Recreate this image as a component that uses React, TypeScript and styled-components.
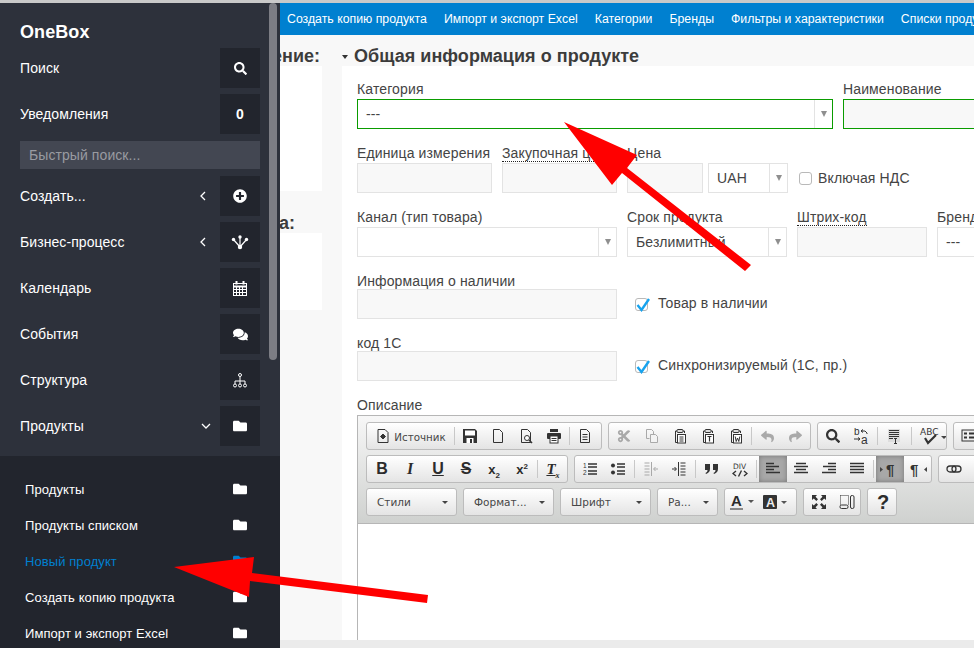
import React from 'react';
import styled, { createGlobalStyle } from 'styled-components';
import { FaSearch, FaPlusCircle, FaComments, FaFolder, FaReply, FaShare, FaCut } from 'react-icons/fa';

const Global = createGlobalStyle`
  html, body { margin: 0; padding: 0; background: #f8f8f8; }
  body { font-family: "Liberation Sans", Arial, sans-serif; overflow: hidden; }
  * { box-sizing: border-box; }
`;

const Page = styled.div`
  position: relative;
  width: 974px;
  height: 648px;
  overflow: hidden;
  display: flex;
  flex-direction: column;
  background: #f8f8f8;
`;
const TopStrip = styled.div`height: 3px; flex: none; background: #c9c9c9;`;
const Shell = styled.div`flex: 1; display: flex; min-height: 0;`;

const Sidebar = styled.aside`
  position: relative;
  width: 280px;
  flex: none;
  background: #2d313b;
  color: #fff;
  letter-spacing: 0.08px;
  display: flex;
  flex-direction: column;
  overflow: hidden;
`;
const Thumb = styled.div`
  position: absolute;
  left: 269px;
  top: 0;
  width: 8px;
  height: 357px;
  border-radius: 4px;
  background: #7c7d84;
`;
const Brand = styled.div`
  height: 45px;
  padding: 19px 20px 0;
  font-size: 18px;
  line-height: 21px;
  font-weight: 700;
`;
const MenuList = styled.div`
  display: flex;
  flex-direction: column;
  gap: 6px;
  padding: 0 20px;
`;
const MenuRow = styled.div`
  height: 40px;
  display: flex;
  align-items: center;
  font-size: 14px;
`;
const MenuLabel = styled.span`flex: 1;`;
const Chevron = styled.span<{ $right: number }>`
  display: flex;
  margin-right: ${p => p.$right}px;
`;
const Tile = styled.span<{ $size: number; $active?: boolean }>`
  width: ${p => p.$size}px;
  height: ${p => p.$size}px;
  flex: none;
  display: flex;
  align-items: center;
  justify-content: center;
  background: #22252d;
  color: ${p => (p.$active ? '#0080d0' : '#fff')};
  font-size: 14px;
  font-weight: 700;
`;
const QuickSearch = styled.div`
  height: 28px;
  margin: 1px 0;
  padding-left: 9px;
  display: flex;
  align-items: center;
  font-size: 14px;
  color: #999ba1;
  background: #434752;
`;
const SubMenu = styled.div`
  flex: 1;
  margin-top: 10px;
  padding: 18px 25px 0;
  background: #22252d;
  display: flex;
  flex-direction: column;
  gap: 6px;
`;
const SubRow = styled.div<{ $active?: boolean }>`
  height: 30px;
  flex: none;
  display: flex;
  align-items: center;
  justify-content: space-between;
  font-size: 13px;
  color: ${p => (p.$active ? '#0080d0' : '#fff')};
`;

const Main = styled.main`
  flex: 1;
  min-width: 0;
  display: flex;
  flex-direction: column;
  overflow: hidden;
`;
const Nav = styled.nav`
  height: 32px;
  flex: none;
  display: flex;
  align-items: center;
  gap: 17px;
  padding: 0 0 1px 7px;
  background: #0080d0;
  color: #fff;
  font-size: 12.3px;
  white-space: nowrap;
  overflow: hidden;
`;
const Body = styled.div`flex: 1; min-height: 0; display: flex;`;
const SideColumn = styled.div`
  width: 62px;
  flex: none;
  display: flex;
  flex-direction: column;
  overflow: hidden;
`;
const SideTitle = styled.div<{ $pad: number; $top?: number }>`
  height: 31px;
  margin-top: ${p => p.$top ?? 0}px;
  display: flex;
  justify-content: flex-end;
  align-items: flex-end;
  padding-right: ${p => p.$pad}px;
  font-size: 18px;
  line-height: 20px;
  font-weight: 700;
  color: #3c3c3c;
  white-space: nowrap;
`;
const SidePanel = styled.div<{ $h: number }>`
  width: 42px;
  height: ${p => p.$h}px;
  background: #fff;
`;
const FormColumn = styled.div`flex: 1; min-width: 0; display: flex; flex-direction: column; overflow: hidden;`;
const FormTitle = styled.h2`
  height: 31px;
  flex: none;
  margin: 0;
  display: flex;
  align-items: flex-end;
  gap: 6px;
  font-size: 18px;
  line-height: 20px;
  font-weight: 700;
  letter-spacing: 0.04px;
  color: #3c3c3c;
  white-space: nowrap;
`;
const TitleCaret = styled.span`
  width: 0;
  height: 0;
  margin-bottom: 7px;
  border-left: 3.5px solid transparent;
  border-right: 3.5px solid transparent;
  border-top: 4px solid #333;
`;
const FormPanel = styled.div`
  flex: 1;
  min-height: 0;
  padding: 15px 0 0 15px;
  background: #fff;
  letter-spacing: 0.13px;
  display: flex;
  flex-direction: column;
  overflow: hidden;
`;
const Row = styled.div<{ $top: number }>`
  display: flex;
  gap: 10px;
  margin-top: ${p => p.$top}px;
  align-items: flex-end;
  flex: none;
  width: 800px;
`;
const Field = styled.div<{ $w: number; $shift?: number }>`
  width: ${p => p.$w}px;
  margin-left: ${p => p.$shift ?? 0}px;
  flex: none;
`;
const Label = styled.div<{ $top?: number; $close?: boolean }>`
  height: ${p => (p.$close ? 16 : 18)}px;
  margin-top: ${p => p.$top ?? 0}px;
  flex: none;
  line-height: 17px;
  font-size: 14px;
  color: #444;
  white-space: nowrap;
`;
const HintText = styled.span`
  border-bottom: 1px dotted #222;
  display: inline-block;
  line-height: 15px;
`;
const TextBox = styled.div<{ $green?: boolean }>`
  height: 30px;
  background: #f8f8f8;
  border: 1px solid ${p => (p.$green ? '#0a9c00' : '#e3e3e3')};
`;
const SelectBox = styled.div<{ $green?: boolean }>`
  height: 30px;
  display: flex;
  background: #fff;
  border: 1px solid ${p => (p.$green ? '#0a9c00' : '#e3e3e3')};
  font-size: 14px;
  color: #444;
`;
const SelectValue = styled.div`flex: 1; display: flex; align-items: center; padding-left: 8px; white-space: nowrap; overflow: hidden;`;
const SelectArrow = styled.div`
  width: 18px;
  flex: none;
  display: flex;
  align-items: center;
  justify-content: center;
  border-left: 1px solid #e3e3e3;
  &::before {
    content: '';
    border-left: 3.5px solid transparent;
    border-right: 3.5px solid transparent;
    border-top: 6px solid #8f8f8f;
  }
`;
const CheckRow = styled.label<{ $left: number; $gap: number }>`
  height: 30px;
  margin-left: ${p => p.$left}px;
  display: flex;
  align-items: center;
  gap: ${p => p.$gap}px;
  font-size: 14px;
  color: #444;
  white-space: nowrap;
`;
const CheckText = styled.span<{ $lift?: boolean }>`
  padding-bottom: ${p => (p.$lift ? 2 : 0)}px;
`;
const CheckMark = styled.span`
  position: relative;
  width: 13px;
  height: 13px;
  flex: none;
  border: 1px solid #b9b9b9;
  border-radius: 3px;
  background: #fff;
  svg { position: absolute; left: -1px; top: -3px; }
`;

const Editor = styled.div`
  flex: 1;
  width: 800px;
  background: #fff;
  letter-spacing: 0;
  border-left: 1px solid #b6b6b6;
  border-top: 1px solid #b6b6b6;
`;
const Toolbar = styled.div`
  height: 108px;
  padding: 6px 0 0 8px;
  background: linear-gradient(#f7f7f7, #cfd1cf);
  border-bottom: 1px solid #b6b6b6;
  display: flex;
  flex-direction: column;
  gap: 5px;
`;
const ToolRow = styled.div`display: flex; gap: 6px; height: 28px;`;
const Group = styled.div<{ $w: number }>`
  width: ${p => p.$w}px;
  height: 28px;
  flex: none;
  padding-left: 1px;
  display: flex;
  align-items: center;
  border: 1px solid #bcbcbc;
  border-radius: 3px;
  background: linear-gradient(#fff, #e4e4e4);
  overflow: hidden;
`;
const Btn = styled.span<{ $w?: number; $on?: boolean }>`
  width: ${p => p.$w ?? 28}px;
  height: 26px;
  flex: none;
  display: flex;
  align-items: center;
  justify-content: center;
  gap: 3px;
  font-size: 10.3px;
  color: #474747;
  font-family: "DejaVu Sans", Verdana, sans-serif;
  background: ${p => (p.$on ? '#a8a8a8' : 'transparent')};
  box-shadow: ${p => (p.$on ? 'inset 0 0 5px #777' : 'none')};
`;
const BtnText = styled.span`padding-top: 1px;`;
const Sep = styled.i<{ $m?: number }>`
  width: 1px;
  height: 18px;
  flex: none;
  margin: 0 ${p => p.$m ?? 1}px;
  background: #c8c8c8;
`;
const Combo = styled.div<{ $w: number }>`
  width: ${p => p.$w}px;
  height: 28px;
  flex: none;
  padding: 0 8px 0 10px;
  display: flex;
  align-items: center;
  justify-content: space-between;
  border: 1px solid #bcbcbc;
  border-radius: 3px;
  background: linear-gradient(#fff, #e4e4e4);
  font: 10.5px "DejaVu Sans", Verdana, sans-serif;
  color: #474747;
  &::after {
    content: '';
    border-left: 3px solid transparent;
    border-right: 3px solid transparent;
    border-top: 3px solid #444;
  }
`;
const Glyph = styled.span<{ $font?: string; $size?: number; $italic?: boolean; $line?: string }>`
  font-family: ${p => p.$font ?? '"Liberation Sans"'}, sans-serif;
  font-size: ${p => p.$size ?? 16}px;
  font-weight: 700;
  font-style: ${p => (p.$italic ? 'italic' : 'normal')};
  text-decoration: ${p => p.$line ?? 'none'};
  color: #2c2c2c;
  line-height: 1;
  sub, sup { font-size: 8px; line-height: 0; }
`;
const Overlay = styled.svg`
  position: absolute;
  left: 0;
  top: 0;
  pointer-events: none;
`;
const ScrollTrack = styled.div`height: 8px; flex: none; background: #ebebeb;`;

const D = '#333';
const G = '#a9a9a9';
const Ic: React.FC<{ size?: number; w?: number; children: React.ReactNode }> = ({ size = 16, w, children }) => (
  <svg width={w ?? size} height={size} viewBox={`0 0 ${w ?? 16} 16`} fill="none" stroke={D} strokeWidth="1">{children}</svg>
);
const lines = (rows: [number, number][], color = D) => rows.map(([a, b], i) => (
  <path key={i} d={`M${a} ${2.5 + i * 3}H${b}`} stroke={color} strokeWidth="1.6" />
));

const Doc = () => <path d="M3.5 1.5h6l3 3v10h-9z" />;
const Clip = ({ c = D }: { c?: string }) => (
  <>
    <path d="M5 3H3.5v11.5H5M11 3h1.5v2" stroke={c} />
    <rect x="5" y="1.5" width="6" height="3" rx="1" stroke={c} fill="#ddd" />
    <rect x="5.5" y="6.5" width="8" height="8.5" stroke={c} fill="#fff" />
  </>
);
const Source = () => <Ic><path d="M3 1.5h7l3 3v10H3z" /><path d="M8 6l2.5 2.5L8 11 5.5 8.5z" fill={D} /></Ic>;
const Save = () => <Ic><path d="M1 1h12l2 2v12H1z" fill={D} stroke="none" /><rect x="3" y="2.5" width="10" height="5" fill="#fff" stroke="none" /><rect x="4.5" y="10" width="7" height="5" fill="#fff" stroke="none" /><rect x="8" y="11" width="2" height="4" fill={D} stroke="none" /></Ic>;
const NewDoc = () => <Ic><Doc /></Ic>;
const Preview = () => <Ic><Doc /><circle cx="9" cy="10" r="2.5" fill="#fff" /><path d="M11 12l3 3" strokeWidth="1.6" /></Ic>;
const Print = () => <Ic><rect x="4" y="1" width="8" height="3" fill={D} stroke="none" /><rect x="1" y="5" width="14" height="6" rx="1" fill={D} stroke="none" /><rect x="4" y="8" width="8" height="7" fill="#fff" /><path d="M5.5 10.5h5M5.5 12.5h5" /></Ic>;
const Templates = () => <Ic><Doc /><path d="M5.5 6.5h5M5.5 9h5M5.5 11.5h5" /></Ic>;
const Copy = () => <Ic><g stroke={G}><path d="M2.5 1.5h5l2 2v3" /><path d="M2.5 1.5v9h3" /><path d="M6.5 6.5h5l2 2v6h-7z" fill="#f3f3f3" /></g></Ic>;
const PasteIc = () => <Ic><Clip /><path d="M7.5 9h4M7.5 11h4M7.5 13h4" /></Ic>;
const PasteText = () => <Ic><Clip /><path d="M7.5 8.5h4M9.5 8.5v5" strokeWidth="1.2" /></Ic>;
const PasteWord = () => <Ic><Clip /><path d="M7.2 8.5l1 5 1.3-3.5 1.3 3.5 1-5" strokeWidth="1" /></Ic>;
const Replace = () => (
  <Ic>
    <text x="1" y="7" fontSize="10" fontFamily="Liberation Sans" fill={D} stroke="none">b</text>
    <text x="8" y="15.5" fontSize="12" fontFamily="Liberation Sans" fill={D} stroke="none">a</text>
    <path d="M8 3h4l2 2v1M8 3l2-1.5M8 3l2 1.5M1 11h6M7 11l-2-1.5M7 11l-2 1.5" />
  </Ic>
);
const SelectAll = () => <Ic><rect x="2" y="1" width="12" height="13" fill="#ddd" stroke="none" /><path d="M3 2.5h10M3 4.5h10M3 6.5h10M3 8.5h10M3 10.5h4M8 15.5h3M9.5 10.5v5M8 10.5h3" /></Ic>;
const Spell = () => (
  <svg width="30" height="18" viewBox="0 0 30 18" fill="none">
    <text x="1" y="8" fontSize="9" fontFamily="DejaVu Sans" fill={D}>ABC</text>
    <path d="M6 11l3 5 8-8" stroke={D} strokeWidth="2.2" />
    <path d="M22 9h6l-3 3z" fill="#444" />
  </svg>
);
const FormIc = () => <Ic w={16}><rect x="1" y="2" width="14" height="11" fill="#eee" /><path d="M3 5.5h3M8 5.5h5M3 9.5h3M8 9.5h5" strokeWidth="2" /></Ic>;
const ClearF = () => (
  <Glyph $size={15} $font='"Liberation Serif"' $italic $line="underline">T<sub>x</sub></Glyph>
);
const NumList = () => <Ic><text x="1" y="7" fontSize="6.5" fontFamily="Liberation Sans" fill={D} stroke="none">1</text><text x="1" y="14" fontSize="6.5" fontFamily="Liberation Sans" fill={D} stroke="none">2</text><path d="M6 3h9M6 6h9M6 10h9M6 13h9" strokeWidth="1.3" /></Ic>;
const BulList = () => <Ic><circle cx="3" cy="4.5" r="2" fill={D} stroke="none" /><circle cx="3" cy="11.5" r="2" fill={D} stroke="none" /><path d="M7 3h8M7 6h8M7 10h8M7 13h8" strokeWidth="1.3" /></Ic>;
const Indent = ({ c = D, flip = false }: { c?: string; flip?: boolean }) => (
  <Ic>
    <g stroke={c} transform={flip ? 'matrix(-1 0 0 1 16 0)' : undefined}>
      <path d="M1 8h4M3.5 6l2 2-2 2" />
      <path d="M7.5 1v14" />
      <path d="M9.5 2h5M9.5 5h5M9.5 8h5M9.5 11h5M9.5 14h5" />
    </g>
  </Ic>
);
const Quote = () => <Ic><path d="M1 3h5v5c0 3-2 4-4 5l-.5-1c1-.5 2-1.2 2-3H1zM9 3h5v5c0 3-2 4-4 5l-.5-1c1-.5 2-1.2 2-3H9z" fill={D} stroke="none" /></Ic>;
const DivIc = () => (
  <Ic>
    <text x="1" y="7.5" fontSize="7.5" fontFamily="DejaVu Sans" fill={D} stroke="none">DIV</text>
    <path d="M4 10l-3 2.5L4 15M12 10l3 2.5-3 2.5M9.5 9.5l-3 6" strokeWidth="1.4" />
  </Ic>
);
const Align = ({ rows }: { rows: [number, number][] }) => <Ic>{lines(rows)}</Ic>;
const Ltr = () => <svg width="22" height="16" viewBox="0 0 22 16"><path d="M1 6l3 2.5L1 11z" fill="#444" /><text x="7" y="14" fontSize="15" fontWeight="700" fontFamily="Liberation Sans" fill={D}>¶</text></svg>;
const Rtl = () => <svg width="22" height="16" viewBox="0 0 22 16"><text x="3" y="14" fontSize="15" fontWeight="700" fontFamily="Liberation Sans" fill={D}>¶</text><path d="M20 6l-3 2.5 3 2.5z" fill="#444" /></svg>;
const LinkIc = () => <Ic><rect x="1" y="5" width="9" height="6" rx="3" strokeWidth="1.3" /><rect x="6" y="5" width="9" height="6" rx="3" strokeWidth="1.3" /></Ic>;
const ColorA = () => (
  <svg width="28" height="18" viewBox="0 0 28 18">
    <text x="2" y="13" fontSize="15" fontWeight="700" fontFamily="Liberation Sans" fill="#2c2c2c">A</text>
    <rect x="1" y="15" width="13" height="2" fill="#888" />
    <path d="M19 7h6l-3 3z" fill="#555" />
  </svg>
);
const BgA = () => (
  <svg width="28" height="16" viewBox="0 0 28 16">
    <rect x="1" y="1" width="14" height="14" rx="1" fill="#333" />
    <text x="4" y="13" fontSize="12.5" fontWeight="700" fontFamily="Liberation Sans" fill="#eee">A</text>
    <path d="M19 7h6l-3 3z" fill="#555" />
  </svg>
);
const Maximize = () => <Ic><path d="M1 1h5L4.5 2.8 7 5.3 5.3 7 2.8 4.5 1 6zM15 1v5l-1.8-1.5L10.7 7 9 5.3 11.5 2.8 10 1zM1 15v-5l1.8 1.5L5.3 9 7 10.7 4.5 13.2 6 15zM15 15h-5l1.5-1.8L9 10.7 10.7 9l2.5 2.5L15 10z" fill={D} stroke="none" /></Ic>;
const Blocks = () => <Ic w={16}><path d="M1.5 1.5h8v9" strokeDasharray="1 1" /><path d="M1.5 1.5v9" strokeDasharray="1 1" /><rect x="1" y="11" width="8" height="3.5" rx="1.5" /><rect x="11.5" y="1.5" width="3.5" height="13" rx="1.5" /></Ic>;

const Branch = () => (
  <svg width="18" height="16" viewBox="0 0 18 16" fill="#fff" stroke="none">
    <circle cx="9" cy="13" r="2.2" /><circle cx="9" cy="3" r="1.7" /><circle cx="2.5" cy="5.5" r="1.7" /><circle cx="15.5" cy="5.5" r="1.7" />
    <path d="M9 3v10M2.5 5.5L9 13M15.5 5.5L9 13" fill="none" stroke="#fff" strokeWidth="1.2" />
  </svg>
);
const Calendar = () => (
  <svg width="14" height="15" viewBox="0 0 14 15" fill="none" stroke="#fff">
    <rect x=".5" y="2.5" width="13" height="12" />
    <path d="M.5 5.5h13" strokeWidth="2" />
    <path d="M.5 8.5h13M.5 11.5h13M3.5 5v10M6.5 5v10M9.5 5v10" />
    <path d="M3.5 0v3.5M10.5 0v3.5" strokeWidth="2" />
  </svg>
);
const Org = () => (
  <svg width="14" height="15" viewBox="0 0 14 15" fill="none" stroke="#fff">
    <circle cx="7" cy="2" r="1.5" /><circle cx="2" cy="12.5" r="1.5" /><circle cx="7" cy="12.5" r="1.5" /><circle cx="12" cy="12.5" r="1.5" />
    <path d="M7 3.5V11M2 11V8h10v3" />
  </svg>
);
const LeftChev = () => <svg width="6" height="10" viewBox="0 0 6 10" fill="none" stroke="#fff" strokeWidth="1.3"><path d="M5 1L1 5l4 4" /></svg>;
const DownChev = () => <svg width="10" height="6" viewBox="0 0 10 6" fill="none" stroke="#fff" strokeWidth="1.3"><path d="M1 1l4 4 4-4" /></svg>;
const Tick = () => <svg width="16" height="17" viewBox="0 0 16 17" fill="none"><path d="M2.5 9L6.5 14 14 3" stroke="#17a3ee" strokeWidth="2.4" /></svg>;

const Menu: React.FC<{ label: string; chevron?: 'left' | 'down'; children: React.ReactNode }> = ({ label, chevron, children }) => (
  <MenuRow>
    <MenuLabel>{label}</MenuLabel>
    {chevron === 'left' && <Chevron $right={14}><LeftChev /></Chevron>}
    {chevron === 'down' && <Chevron $right={9}><DownChev /></Chevron>}
    <Tile $size={40}>{children}</Tile>
  </MenuRow>
);
const Sub: React.FC<{ label: string; active?: boolean }> = ({ label, active }) => (
  <SubRow $active={active}>
    {label}
    <Tile $size={30} $active={active}><FaFolder size={14} /></Tile>
  </SubRow>
);
const Select: React.FC<{ value?: string; green?: boolean }> = ({ value, green }) => (
  <SelectBox $green={green}><SelectValue>{value}</SelectValue><SelectArrow /></SelectBox>
);

const App: React.FC = () => (
  <Page>
    <Global />
    <TopStrip />
    <Shell>
      <Sidebar>
        <Brand>OneBox</Brand>
        <MenuList>
          <Menu label="Поиск"><FaSearch size={13} /></Menu>
          <Menu label="Уведомления">0</Menu>
          <QuickSearch>Быстрый поиск...</QuickSearch>
          <Menu label="Создать..." chevron="left"><FaPlusCircle size={14} /></Menu>
          <Menu label="Бизнес-процесс" chevron="left"><Branch /></Menu>
          <Menu label="Календарь"><Calendar /></Menu>
          <Menu label="События"><FaComments size={15} /></Menu>
          <Menu label="Структура"><Org /></Menu>
          <Menu label="Продукты" chevron="down"><FaFolder size={14} /></Menu>
        </MenuList>
        <SubMenu>
          <Sub label="Продукты" />
          <Sub label="Продукты списком" />
          <Sub label="Новый продукт" active />
          <Sub label="Создать копию продукта" />
          <Sub label="Импорт и экспорт Excel" />
        </SubMenu>
        <Thumb />
      </Sidebar>
      <Main>
        <Nav>
          <span>Создать копию продукта</span>
          <span>Импорт и экспорт Excel</span>
          <span>Категории</span>
          <span>Бренды</span>
          <span>Фильтры и характеристики</span>
          <span>Списки продуктов</span>
        </Nav>
        <Body>
          <SideColumn>
            <SideTitle $pad={22}>Назначение:</SideTitle>
            <SidePanel $h={125} />
            <SideTitle $pad={47} $top={11}>Цена:</SideTitle>
            <SidePanel $h={77} />
          </SideColumn>
          <FormColumn>
            <FormTitle><TitleCaret />Общая информация о продукте</FormTitle>
            <FormPanel>
              <Row $top={0}>
                <Field $w={476}><Label>Категория</Label><Select value="---" green /></Field>
                <Field $w={200}><Label>Наименование</Label><TextBox $green /></Field>
              </Row>
              <Row $top={16}>
                <Field $w={135}><Label>Единица измерения</Label><TextBox /></Field>
                <Field $w={115}><Label><HintText>Закупочная цена</HintText></Label><TextBox /></Field>
                <Field $w={76}><Label>Цена</Label><TextBox /></Field>
                <Field $w={80} $shift={-5}><Select value="UAH" /></Field>
                <CheckRow $left={1} $gap={6}><CheckMark /><CheckText>Включая НДС</CheckText></CheckRow>
              </Row>
              <Row $top={16}>
                <Field $w={260}><Label>Канал (тип товара)</Label><Select /></Field>
                <Field $w={160}><Label>Срок продукта</Label><Select value="Безлимитный" /></Field>
                <Field $w={130}><Label><HintText>Штрих-код</HintText></Label><TextBox /></Field>
                <Field $w={200}><Label>Бренд</Label><Select value="---" /></Field>
              </Row>
              <Row $top={16}>
                <Field $w={260}><Label $close>Информация о наличии</Label><TextBox /></Field>
                <CheckRow $left={8} $gap={10}><CheckMark><Tick /></CheckMark><CheckText $lift>Товар в наличии</CheckText></CheckRow>
              </Row>
              <Row $top={16}>
                <Field $w={260}><Label $close>код 1С</Label><TextBox /></Field>
                <CheckRow $left={8} $gap={10}><CheckMark><Tick /></CheckMark><CheckText $lift>Синхронизируемый (1С, пр.)</CheckText></CheckRow>
              </Row>
              <Label $top={16}>Описание</Label>
              <Editor>
                <Toolbar>
                  <ToolRow>
                    <Group $w={236}>
                      <Btn $w={85}><Source /><BtnText>Источник</BtnText></Btn><Sep />
                      <Btn><Save /></Btn><Btn><NewDoc /></Btn><Btn><Preview /></Btn><Btn><Print /></Btn><Sep />
                      <Btn><Templates /></Btn>
                    </Group>
                    <Group $w={203}>
                      <Btn><FaCut size={14} color={G} /></Btn><Btn><Copy /></Btn><Btn><PasteIc /></Btn><Btn><PasteText /></Btn><Btn><PasteWord /></Btn><Sep />
                      <Btn><FaReply size={13} color={G} /></Btn><Btn><FaShare size={13} color={G} /></Btn>
                    </Group>
                    <Group $w={130}>
                      <Btn><FaSearch size={14} color={D} /></Btn><Btn><Replace /></Btn><Sep $m={2} />
                      <Btn><SelectAll /></Btn><Sep $m={3} />
                      <Btn $w={38}><Spell /></Btn>
                    </Group>
                    <Group $w={60}><Btn><FormIc /></Btn></Group>
                  </ToolRow>
                  <ToolRow>
                    <Group $w={202}>
                      <Btn><Glyph>B</Glyph></Btn>
                      <Btn><Glyph $font='"Liberation Serif"' $italic>I</Glyph></Btn>
                      <Btn><Glyph $line="underline">U</Glyph></Btn>
                      <Btn><Glyph $line="line-through">S</Glyph></Btn>
                      <Btn><Glyph $size={13}>x<sub>2</sub></Glyph></Btn>
                      <Btn><Glyph $size={13}>x<sup>2</sup></Glyph></Btn><Sep />
                      <Btn><ClearF /></Btn>
                    </Group>
                    <Group $w={358}>
                      <Btn><NumList /></Btn><Btn><BulList /></Btn><Sep $m={2} />
                      <Btn><Indent c={G} flip /></Btn><Btn><Indent /></Btn><Sep $m={2} />
                      <Btn><Quote /></Btn><Btn><DivIc /></Btn><Sep $m={2} />
                      <Btn $on><Align rows={[[1, 9], [1, 14], [1, 9], [1, 15]]} /></Btn>
                      <Btn><Align rows={[[3, 13], [1, 15], [3, 13], [1, 15]]} /></Btn>
                      <Btn><Align rows={[[7, 15], [2, 15], [7, 15], [1, 15]]} /></Btn>
                      <Btn><Align rows={[[1, 15], [1, 15], [1, 15], [1, 15]]} /></Btn><Sep $m={2} />
                      <Btn $on><Ltr /></Btn><Btn><Rtl /></Btn>
                    </Group>
                    <Group $w={60}><Btn><LinkIc /></Btn></Group>
                  </ToolRow>
                  <ToolRow>
                    <Combo $w={91}>Стили</Combo>
                    <Combo $w={91}>Формат...</Combo>
                    <Combo $w={91}>Шрифт</Combo>
                    <Combo $w={61}>Ра...</Combo>
                    <Group $w={73}><Btn $w={33}><ColorA /></Btn><Btn $w={33}><BgA /></Btn></Group>
                    <Group $w={58}><Btn><Maximize /></Btn><Btn><Blocks /></Btn></Group>
                    <Group $w={30}><Btn><Glyph $size={20}>?</Glyph></Btn></Group>
                  </ToolRow>
                </Toolbar>
              </Editor>
            </FormPanel>
          </FormColumn>
        </Body>
        <ScrollTrack />
      </Main>
    </Shell>
    <Overlay width="974" height="648" viewBox="0 0 974 648">
      <polygon fill="#ff0000" points="564,122 637,155 627,168 751,265 745,271 622,173 612,185" />
      <polygon fill="#ff0000" points="174,567 254,557 252,573 428,595 427,603 250,581 249,597" />
    </Overlay>
  </Page>
);

export default App;
